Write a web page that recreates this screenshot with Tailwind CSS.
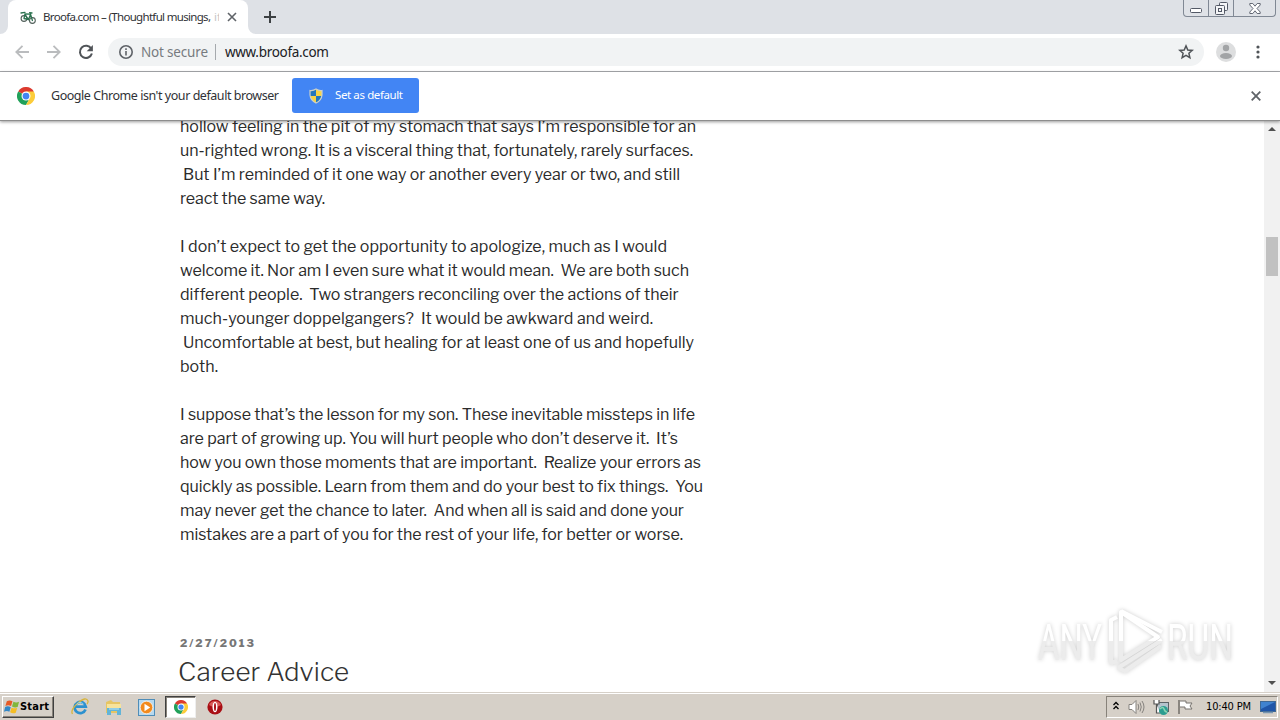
<!DOCTYPE html>
<html lang="en">
<head>
<meta charset="utf-8">
<title>Broofa.com</title>
<script src="https://cdn.jsdelivr.net/npm/@tailwindcss/browser@4"></script>
</head>
<body class="w-[1280px] h-[720px] overflow-hidden flex flex-col bg-white font-['Noto_Sans','Open_Sans',sans-serif] text-[#303236]">

<!-- Tab strip -->
<header class="h-[34px] shrink-0 bg-[#dee1e6] flex items-start">
  <div class="relative ml-2 w-[240px] h-[34px] bg-white rounded-t-lg flex items-center pl-3">
    <svg class="absolute -left-2 bottom-0" width="8" height="8"><path d="M8 0V8H0A8 8 0 0 0 8 0Z" fill="#fff"/></svg>
    <svg class="absolute -right-2 bottom-0" width="8" height="8"><path d="M0 0V8H8A8 8 0 0 1 0 0Z" fill="#fff"/></svg>
    <svg width="16" height="16" viewBox="0 0 16 16" fill="none" stroke-linecap="round"><g stroke="#53615c" stroke-width="1.1"><circle cx="4" cy="9.500" r="2.900"/><circle cx="12.400" cy="11.500" r="2.900"/></g><path d="M1 4L5 3.400M4 9.500L5 5L10.500 5.200L12.400 11.500M5 5.500L8.500 10.500L10.500 5.500M4 9.500L8.500 10.500M9.600 3.600L12 4" stroke="#2c7350" stroke-width="1.300"/></svg>
    <div class="ml-[7px] w-[176px] overflow-hidden whitespace-nowrap text-[11.5px] leading-4"><span data-w="168">Broofa.com – (Thoughtful musings,</span><span class="text-[#c4c6c8]"> if</span></div>
    <svg class="ml-[8px]" width="10" height="10" viewBox="0 0 10 10" stroke="#5f6368" stroke-width="1.6"><path d="M1 1L9 9M9 1L1 9"/></svg>
  </div>
  <svg class="ml-4 mt-[11px]" width="12" height="12" stroke="#3c4043" stroke-width="2"><path d="M6 0V12M0 6H12"/></svg>
  <div class="ml-auto mr-1 h-[17px] w-[93px] flex border border-t-0 border-[#808894] rounded-b-[4px] bg-[#dfe2e7]">
    <div class="w-[25px] border-r border-[#808894] flex justify-center items-start pt-2"><svg width="12" height="5"><rect x=".5" y=".5" width="11" height="4" rx="1" fill="#fff" stroke="#535966"/></svg></div>
    <div class="w-[25px] border-r border-[#808894] flex justify-center items-start pt-[2px]"><svg width="13" height="13" fill="#f4f5f7" stroke="#535966"><rect x="4.500" y=".5" width="8" height="8" rx="1"/><rect x=".5" y="3.500" width="9" height="9" rx="1"/><rect x="3.500" y="6.500" width="3" height="3"/></svg></div>
    <div class="flex-1 flex justify-center items-start pt-[3px]"><svg width="12" height="11" viewBox="0 0 12 11"><path d="M.8.5H3.8L6 3.200L8.200.5H11.200V2L8 5.500L11.200 9V10.500H8.200L6 7.800L3.800 10.500H.8V9L4 5.500L.8 2Z" fill="#fff" stroke="#535966" stroke-width=".9"/></svg></div>
  </div>
</header>

<!-- Address bar -->
<div class="h-[38px] shrink-0 border-b border-[#a9abae] bg-white flex items-center pb-px">
  <svg class="ml-[15px]" width="14" height="14" fill="none" stroke="#babcbe" stroke-width="1.8"><path d="M14 7H1.500M7.500 .8L1.300 7L7.500 13.200"/></svg>
  <svg class="ml-[18px]" width="14" height="14" fill="none" stroke="#babcbe" stroke-width="1.8"><path d="M0 7H12.500M6.500 .8L12.700 7L6.500 13.200"/></svg>
  <svg class="ml-[17px]" width="16" height="16" viewBox="0 0 16 16" fill="none"><path d="M13.300 4.700A6.100 6.100 0 1 0 13.900 9.500" stroke="#505458" stroke-width="2"/><path d="M14.900 1V7.200H8.700Z" fill="#505458"/></svg>
  <div class="ml-[14px] w-[1096px] h-7 rounded-full bg-[#f1f3f4] flex items-center text-[13.500px] leading-4 whitespace-nowrap">
    <svg class="ml-[11px]" width="14" height="14" fill="none" stroke="#5f6368" stroke-width="1.6"><circle cx="7" cy="7" r="6.200"/><path d="M7 6V10.500M7 3.300V5"/></svg>
    <span class="ml-2 text-[#777b80]" data-w="67">Not secure</span>
    <span class="ml-[7px] w-px h-4 bg-[#a5a9ad]"></span>
    <span class="ml-[9px] text-[#202124]" data-w="104">www.broofa.com</span>
    <svg class="ml-auto mr-[10px]" width="16" height="16" viewBox="0 0 16 16" fill="none" stroke="#505458" stroke-width="1.500"><path d="M8 1.900L9.800 6L14.200 6.400L10.900 9.300L11.900 13.700L8 11.400L4.100 13.700L5.100 9.300L1.800 6.400L6.200 6Z"/></svg>
  </div>
  <svg class="ml-3" width="20" height="20"><circle cx="10" cy="10" r="10" fill="#dddedf"/><circle cx="10" cy="6" r="3.200" fill="#a2a4a6"/><ellipse cx="10" cy="14" rx="6" ry="3" fill="#a2a4a6"/></svg>
  <svg class="ml-5" width="4" height="14" fill="#505458"><circle cx="2" cy="2" r="1.600"/><circle cx="2" cy="7" r="1.600"/><circle cx="2" cy="12" r="1.600"/></svg>
</div>

<!-- Default browser bar -->
<div class="relative z-10 h-[49px] shrink-0 bg-white border-b border-[#8d8d8d] shadow-[0_1px_3px_rgba(0,0,0,0.4)] flex items-center pb-px whitespace-nowrap">
  <svg class="ml-[17px]" width="18" height="18" viewBox="0 0 48 48"><path d="M24 24L3.200 12A24 24 0 0 1 44.800 12Z" fill="#dc3a2f"/><path d="M24 24L3.200 12A24 24 0 0 0 24 48L34 30Z" fill="#21a15a"/><path d="M24 12H44.800A24 24 0 0 1 24 48L34.400 30Z" fill="#fccc3a"/><circle cx="24" cy="24" r="12" fill="#fff"/><circle cx="24" cy="24" r="9" fill="#4285f4"/></svg>
  <span class="ml-4 pt-[2px] text-[12.500px]" data-w="228">Google Chrome isn't your default browser</span>
  <div class="ml-[13px] h-[35px] w-[127px] bg-[#4285f4] rounded-[3px] flex items-center text-white text-[11.500px]">
    <svg class="ml-[17px]" width="14" height="16" viewBox="0 0 14 16"><path d="M7 1Q10 3 13 2.500V7Q12.500 12.500 7 15Q1.500 12.500 1 7V2.500Q4 3 7 1Z" fill="#f6d447"/><path d="M7 1V8H1V2.500Q4 3 7 1ZM7 8H13Q12 12.800 7 15Z" fill="#2377bd"/><path d="M7 1Q10 3 13 2.500V7Q12.500 12.500 7 15Q1.500 12.500 1 7V2.500Q4 3 7 1Z" fill="none" stroke="#cbd1cb" stroke-width="1.200"/></svg>
    <span class="ml-3 -mt-px" data-w="68">Set as default</span>
  </div>
  <svg class="ml-auto mr-[19px]" width="10" height="10" stroke="#5f6368" stroke-width="1.800"><path d="M.7.7L9.300 9.300M9.300.7L.7 9.300"/></svg>
</div>

<!-- Page -->
<main class="flex-1 min-h-0 flex overflow-hidden relative">
  <article class="flex-1 pl-[180px] -mt-[6px] font-['Libre_Franklin',Inter,sans-serif] text-[16px] leading-6 text-[#2b2b2b]">
    <p class="mb-6 whitespace-pre"><span data-w="516">hollow feeling in the pit of my stomach that says I’m responsible for an</span><br><span data-w="513">un-righted wrong. It is a visceral thing that, fortunately, rarely surfaces.</span><br><span class="ml-[3px]" data-w="497">But I’m reminded of it one way or another every year or two, and still</span><br><span data-w="145">react the same way.</span></p>
    <p class="mb-6 whitespace-pre"><span data-w="487">I don’t expect to get the opportunity to apologize, much as I would</span><br><span data-w="509">welcome it. Nor am I even sure what it would mean.  We are both such</span><br><span data-w="499">different people.  Two strangers reconciling over the actions of their</span><br><span data-w="473">much-younger doppelgangers?  It would be awkward and weird.</span><br><span class="ml-[3px]" data-w="511">Uncomfortable at best, but healing for at least one of us and hopefully</span><br><span data-w="38">both.</span></p>
    <p class="whitespace-pre"><span data-w="515">I suppose that’s the lesson for my son. These inevitable missteps in life</span><br><span data-w="498">are part of growing up. You will hurt people who don’t deserve it.  It’s</span><br><span data-w="521">how you own those moments that are important.  Realize your errors as</span><br><span data-w="523">quickly as possible. Learn from them and do your best to fix things.  You</span><br><span data-w="504">may never get the chance to later.  And when all is said and done your</span><br><span data-w="503">mistakes are a part of you for the rest of your life, for better or worse.</span></p>
    <div class="mt-[84px] text-[11px] leading-[24px] font-extrabold text-[#767676]"><span data-w="74">2/27/2013</span></div>
    <h2 class="-ml-[2px] text-[26px] leading-[34px] font-light text-[#333]"><span data-w="171">Career Advice</span></h2>
  </article>
  <div class="w-4 bg-[#f1f1f1] flex flex-col items-center">
    <svg class="mt-[5px]" width="8" height="5"><path d="M0 5L4 1L8 5Z" fill="#505050"/></svg>
    <div class="mt-[106px] w-3 h-[39px] bg-[#c1c1c1]"></div>
    <svg class="mt-auto mb-[6px]" width="8" height="5"><path d="M0 0L4 4L8 0Z" fill="#505050"/></svg>
  </div>
  <!-- Watermark floating over the page -->
  <svg class="absolute left-[1030px] top-[481px] drop-shadow-[0_0_2px_rgba(0,0,0,0.2)]" width="214" height="76" viewBox="0 0 214 76">
    <defs><linearGradient id="w" x1="0" y1="0" x2="0" y2="76" gradientUnits="userSpaceOnUse"><stop offset=".51" stop-color="#fff"/><stop offset=".52" stop-color="#ececec"/></linearGradient></defs>
    <g fill="url(#w)" font-family="Roboto, sans-serif" font-size="50"><text x="8" y="58" textLength="64" lengthAdjust="spacingAndGlyphs">ANY</text><text x="137" y="58" textLength="66" lengthAdjust="spacingAndGlyphs">RUN</text></g>
    <g fill="none" stroke="url(#w)" stroke-width="4" stroke-linejoin="round"><path d="M91 10V58L128 35Z"/><path d="M87 15L81 18V61L87 59M91 9L132 30M88 66L132 38M88 66L95 69L131 44"/></g>
  </svg>
</main>

<!-- Taskbar -->
<footer class="h-7 shrink-0 bg-[#d6d0c8] border-t border-[#d6d0c8] shadow-[inset_0_1px_0_#fff] flex items-center pt-px font-['DejaVu_Sans_Condensed','DejaVu_Sans',sans-serif] text-black">
  <div class="ml-[2px] w-[52px] h-[22px] border border-t-white border-l-white border-r-[#404040] border-b-[#404040] shadow-[inset_-1px_-1px_0_#87827a] flex items-center whitespace-nowrap text-[11px] leading-4 font-bold">
    <svg class="ml-[1px]" width="16" height="16" viewBox="0 0 17 16"><path d="M3 2Q6 0 9 2L7.500 7Q4.500 5.500 1.500 7Z" fill="#e75a25"/><path d="M10 2.500Q13 4 16 2.500L14.500 8Q11.500 9 8.500 7.500Z" fill="#81b63b"/><path d="M1.200 8Q4.200 6.500 7.200 8.300L5.700 13Q3 11.500 0 13Z" fill="#3387c6"/><path d="M8 8.700Q11 10 14 9L12.500 14Q9.500 15.500 6.500 13.500Z" fill="#f5bd24"/></svg>
    <span data-w="29">Start</span>
  </div>
  <svg class="ml-[17px]" width="18" height="18" viewBox="0 0 18 18" fill="none"><path d="M14.500 11.500A5.600 5.600 0 1 1 14.800 8.700H5" stroke="#2c91cf" stroke-width="2.700"/><path d="M1.500 16Q-1 12 7 5T17 3Q17.300 4.200 16 6" stroke="#d8b53d" stroke-width="1.300"/><path d="M5.500 6.500Q9 2.500 12.500 6" stroke="#8bd2f4" stroke-width="1"/></svg>
  <svg class="ml-4" width="17" height="17" viewBox="0 0 17 17"><path d="M1 3L6 1L8 3H15V14H1Z" fill="#e6c564"/><path d="M2 5H16V11H2Z" fill="#f7e39b"/><path d="M2 9H16V16H12V12H6V16H2Z" fill="#62b4d8"/><path d="M4 10H14" stroke="#c0e8f4"/></svg>
  <svg class="ml-[16px]" width="17" height="17" viewBox="0 0 17 17"><rect x=".5" y=".5" width="16" height="16" fill="#b7d9ef" stroke="#4f8db8"/><circle cx="8.500" cy="8.500" r="6.300" fill="#f28a1d" stroke="#fff" stroke-width=".7"/><path d="M6.500 4.800L12.200 8.500L6.500 12.200Z" fill="#fff"/></svg>
  <div class="ml-[10px] w-[31px] h-[22px] bg-white border border-t-[#404040] border-l-[#404040] border-r-[#eee] border-b-[#eee] shadow-[inset_1px_1px_0_#87827a] flex items-center justify-center">
    <svg width="14" height="14" viewBox="0 0 48 48"><path d="M24 24L3.200 12A24 24 0 0 1 44.800 12Z" fill="#dc3a2f"/><path d="M24 24L3.200 12A24 24 0 0 0 24 48L34 30Z" fill="#21a15a"/><path d="M24 12H44.800A24 24 0 0 1 24 48L34.400 30Z" fill="#fccc3a"/><circle cx="24" cy="24" r="12" fill="#fff"/><circle cx="24" cy="24" r="9" fill="#4285f4"/></svg>
  </div>
  <svg class="ml-[11px]" width="16" height="16"><circle cx="8" cy="8" r="7.600" fill="#a90e14"/><path d="M2 6A6.500 6.500 0 0 1 14 6Q8 10 2 6Z" fill="#d85a57"/><ellipse cx="8" cy="8" rx="2.500" ry="5.300" fill="#fff"/><ellipse cx="8" cy="8" rx="1" ry="4" fill="#a90e14"/></svg>
  <div class="ml-auto mr-[2px] w-[172px] h-[22px] border border-t-[#87827a] border-l-[#87827a] border-r-white border-b-white flex items-center whitespace-nowrap text-[11px] leading-4">
    <svg class="ml-[6px] mb-[3px]" width="6" height="9" fill="none" stroke="#000" stroke-width="1.300"><path d="M.5 4L3 1.500L5.500 4M.5 8L3 5.500L5.500 8"/></svg>
    <svg class="ml-[9px]" width="17" height="16" viewBox="0 0 17 16" fill="none" stroke="#85827e"><path d="M1 5.500H4L8 1.500V14.500L4 10.500H1Z" fill="#fff"/><path d="M10 5Q11.500 8 10 11M12 3.500Q14.500 8 12 12.500M14 2Q18 8 14 14"/></svg>
    <svg class="ml-[8px]" width="17" height="17" viewBox="0 0 17 17"><rect x="4.500" y="3.500" width="11" height="9" fill="#b4c3cc" stroke="#5b6265"/><path d="M1 1V5H6V1M3.500 5V14H7" stroke="#555" stroke-width="1.200" fill="#fff"/><circle cx="10.500" cy="11.500" r="4.500" fill="#2c9d91"/><path d="M7 10Q10 7 11 10T14 13" fill="none" stroke="#8ad4b1" stroke-width="1.500"/></svg>
    <svg class="ml-[7px]" width="17" height="16" viewBox="0 0 17 16"><path d="M3 2H9V4H15L13 7L15 10H8V8H3" fill="#fff" stroke="#77736e"/><path d="M2 1V15" stroke="#77736e" stroke-width="1.600"/></svg>
    <span class="ml-3" data-w="45">10:40 PM</span>
    <svg class="ml-auto mr-[1px]" width="16" height="14" viewBox="0 0 16 14"><rect x=".5" y="1.500" width="15" height="10" fill="#1f55a8" stroke="#3f6894"/><path d="M1 2H15L1 9Z" fill="#3f82cf"/><path d="M3 12.500H13" stroke="#7795b1" stroke-width="1.500"/></svg>
  </div>
</footer>

<script>
// Tracks each run of text so that it fills its set measure.
function fitText() {
  document.querySelectorAll('[data-w]').forEach(function (el) {
    el.style.letterSpacing = '0px';
    el.style.marginRight = '0px';
    var n = el.textContent.length;
    var gap = (Number(el.dataset.w) - el.getBoundingClientRect().width) / (n - 1);
    el.style.letterSpacing = gap + 'px';
    el.style.marginRight = -gap + 'px';
  });
}
fitText();
window.addEventListener('load', function () {
  fitText();
  document.fonts.ready.then(fitText);
  requestAnimationFrame(fitText);
});
</script>
</body>
</html>
